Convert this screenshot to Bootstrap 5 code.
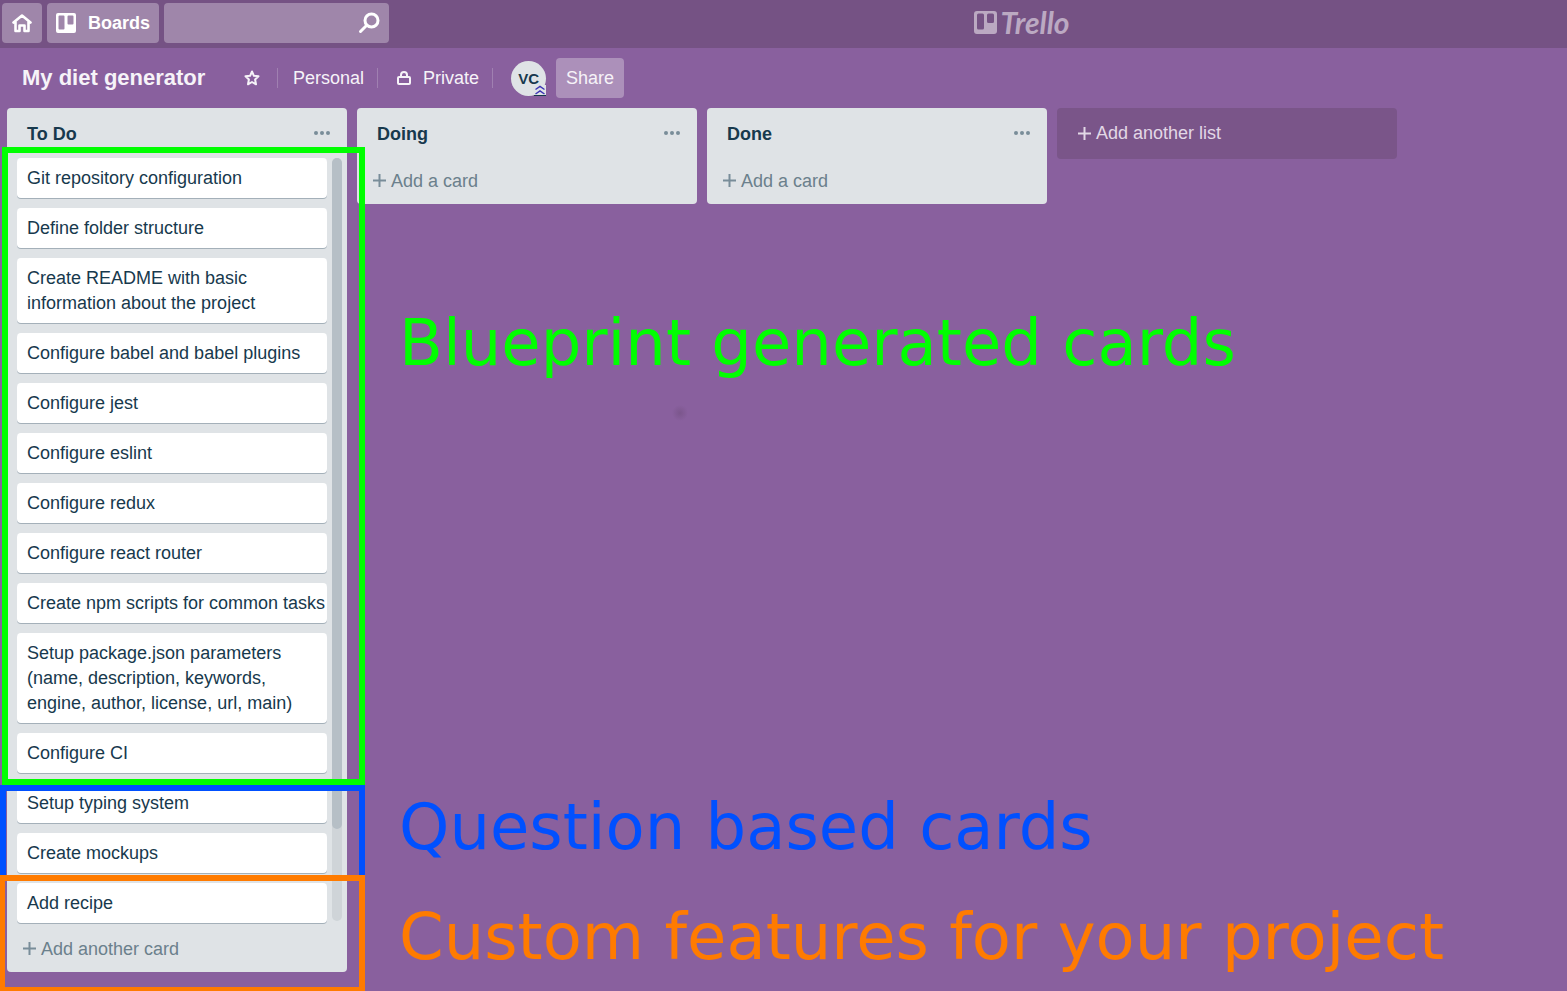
<!DOCTYPE html>
<html lang="en">
<head>
<meta charset="utf-8">
<meta name="viewport" content="width=device-width, initial-scale=1">
<title>My diet generator | Trello</title>
<link href="https://cdn.jsdelivr.net/npm/bootstrap@5.3.0/dist/css/bootstrap.min.css" rel="stylesheet">
<style>
  body { background: #89609e; color: #17394d; font: 18px/25px "Liberation Sans", Arial, sans-serif; min-height: 100vh; overflow: hidden; }
  button { line-height: 25px; }
  .topbar { background: #755284; height: 48px; padding: 3px 2px 5px; gap: 5px; }
  .top-btn { --bs-btn-padding-x: 10px; --bs-btn-padding-y: 0; --bs-btn-font-size: 18px; --bs-btn-font-weight: 700; --bs-btn-border-width: 0; --bs-btn-border-radius: 4px; --bs-btn-color: #fff; --bs-btn-bg: #9f86aa; --bs-btn-hover-bg: #ab94b5; --bs-btn-hover-color: #fff; height: 40px; }
  .boards-btn { --bs-btn-padding-x: 9px; gap: 12px; }
  .top-search { width: 225px; height: 40px; }
  .top-search .form-control { background: #9f86aa; border: 0; border-radius: 4px; color: #fff; height: 40px; padding: 0 40px 0 10px; }
  .search-icon { top: 9px; right: 9px; }
  .brand { left: 62%; top: 7px; height: 30px; gap: 4px; color: #bba9c2; font: italic 700 30px/30px Lato, sans-serif; text-decoration: none; margin-left: 2px; }
  .boardbar { height: 60px; padding-left: 22px; color: #f6f3f8; }
  .boardbar a { color: inherit; text-decoration: none; }
  .boardbar h1 { font-size: 22px; line-height: 30px; font-weight: 700; width: 187px; white-space: nowrap; }
  .rule { width: 1px; height: 20px; background: #a080b1; }
  .plain { background: none; border: 0; padding: 0; color: inherit; display: flex; align-items: center; }
  .star { margin: 0 17px 0 35px; }
  .team { padding: 0 13px 0 15px; }
  .privacy { margin: 0 13px 0 18px; gap: 12px; }
  .avatar { width: 35px; height: 35px; background: #dfe3e6; color: #17394d; font-size: 15px; font-weight: 700; margin-left: 18px; }
  .avatar svg { right: 0; bottom: 0; }
  .share { --bs-btn-bg: #ac90ba; --bs-btn-color: #f6f3f8; --bs-btn-font-weight: 400; margin-left: 10px; }
  .board { gap: 10px; padding: 0 7px; background: radial-gradient(circle at 680px 305px, #7b568c 0, #89609e 8px); min-height: 883px; }
  .lane { width: 340px; border-radius: 4px; background: #dfe3e6; }
  .lane-head { height: 50px; padding: 0 16px 0 20px; }
  .lane-head h2 { font-size: 18px; line-height: 25px; font-weight: 700; padding-top: 2px; }
  .lane-body { padding: 0 5px 3px 10px; gap: 5px; }
  .tasks { gap: 10px; }
  .task { background: #fff; border-radius: 4px; box-shadow: 0 1px 0 #a4b0b9; padding: 8px 0 7px 10px; }
  .track { width: 10px; border-radius: 5px; background: #cfd4d8; margin-bottom: 2px; }
  .thumb { border-radius: 5px; background: #b6bfc6; }
  .add-card { height: 46px; padding: 0 15px; gap: 4px; color: #6b808c; }
  .new-lane { width: 340px; height: 51px; border-radius: 4px; background: #7a5589; color: #e2d8e6; padding: 0 20px; gap: 4px; }
  .notes { top: 147px; pointer-events: none; font: 64px/76px "DejaVu Sans", sans-serif; }
  .note { white-space: nowrap; gap: 34px; }
  .frame { width: 365px; border: 6px solid; }
  .note-green { height: 638px; color: #0f0; }
  .note-green .frame { width: 363px; margin-left: 2px; }
  .note-green p { padding-top: 158px; }
  .note-blue { height: 90px; color: #0050ff; }
  .note-blue .frame { border-bottom: 0; }
  .note-blue p { padding-top: 4px; }
  .note-orange { height: 116px; color: #ff7b00; }
  .note-orange .frame { border-left-width: 5px; border-bottom-width: 4px; }
  .note-orange p { padding-top: 24px; }
</style>
</head>
<body class="position-relative">
<header class="topbar d-flex position-relative">
  <button class="btn top-btn d-flex align-items-center" type="button" aria-label="Home">
    <svg width="20" height="20" viewBox="0 0 20 20" fill="none" stroke="#fff" stroke-width="3" stroke-linejoin="round" stroke-linecap="round"><path d="M1.500 9.500 10 2.500l8.500 7M3.500 9v9h4v-5.500h5V18h4V9" stroke-width="2.600"/></svg>
  </button>
  <button class="btn top-btn boards-btn d-flex align-items-center" type="button">
    <svg width="20" height="20" viewBox="0 0 20 20"><path fill="#fff" fill-rule="evenodd" d="M2 0h16a2 2 0 0 1 2 2v16a2 2 0 0 1-2 2H2a2 2 0 0 1-2-2V2a2 2 0 0 1 2-2zm1.500 2.500a1 1 0 0 0-1 1v12a1 1 0 0 0 1 1h4a1 1 0 0 0 1-1v-12a1 1 0 0 0-1-1zm9 0a1 1 0 0 0-1 1v7a1 1 0 0 0 1 1h4a1 1 0 0 0 1-1v-7a1 1 0 0 0-1-1z"/></svg>
    <span>Boards</span>
  </button>
  <form class="top-search position-relative" role="search">
    <input class="form-control" type="text" aria-label="Search">
    <svg class="search-icon position-absolute" width="22" height="22" viewBox="0 0 22 22" fill="none" stroke="#fff" stroke-width="3" stroke-linecap="round"><circle cx="13.500" cy="8.500" r="6.500"/><path d="M8.500 13.500 2.500 19.500"/></svg>
  </form>
  <a class="brand position-absolute d-flex align-items-center" href="#">
    <svg width="23" height="23" viewBox="0 0 23 23"><path fill="#bba9c2" fill-rule="evenodd" d="M3 0h17a3 3 0 0 1 3 3v17a3 3 0 0 1-3 3H3a3 3 0 0 1-3-3V3a3 3 0 0 1 3-3zm1.500 2.500a1.500 1.500 0 0 0-1.500 1.500v13a1.500 1.500 0 0 0 1.500 1.500h4a1.500 1.500 0 0 0 1.500-1.500V4a1.500 1.500 0 0 0-1.500-1.500zm10 0A1.500 1.500 0 0 0 13 4v6.500a1.500 1.500 0 0 0 1.500 1.500h4a1.500 1.500 0 0 0 1.500-1.500V4a1.500 1.500 0 0 0-1.500-1.500z"/></svg>
    <span>Trello</span>
  </a>
</header>

<nav class="boardbar d-flex align-items-center" aria-label="Board">
  <h1 class="mb-0">My diet generator</h1>
  <button class="plain star" type="button" aria-label="Star board">
    <svg width="16" height="16" viewBox="0 0 16 16" fill="none" stroke="#f6f3f8" stroke-width="2" stroke-linejoin="round"><path d="m8 1.500 1.900 4.300 4.600.500-3.400 3.200.900 4.800L8 12l-4 2.300.900-4.800L1.500 6.300l4.600-.500z"/></svg>
  </button>
  <span class="rule"></span>
  <a class="team" href="#">Personal</a>
  <span class="rule"></span>
  <button class="plain privacy" type="button">
    <svg width="15" height="16" viewBox="0 0 15 16" fill="none" stroke="#f6f3f8" stroke-width="2"><rect x="2" y="7" width="12" height="7" rx="1"/><path d="M5 7V5a3 3 0 0 1 6 0v2"/></svg>
    <span>Private</span>
  </button>
  <span class="rule"></span>
  <span class="avatar rounded-circle position-relative d-flex align-items-center justify-content-center">VC
    <svg class="position-absolute" width="12" height="11" viewBox="0 0 12 11"><path fill="#dfe3e6" d="M0 0h12v10H0z"/><path d="M1.500 4.500 6 1.500l4.500 3M1.500 9 6 6l4.500 3" fill="none" stroke="#3d35b5" stroke-width="1.500"/><path fill="#17394d" d="M0 10h12v1H0z"/></svg>
  </span>
  <button class="btn top-btn share" type="button">Share</button>
</nav>

<main class="board d-flex align-items-start">
  <section class="lane flex-shrink-0">
    <div class="lane-head d-flex align-items-center justify-content-between">
      <h2 class="mb-0">To Do</h2>
      <button class="plain" type="button" aria-label="List actions"><svg width="18" height="6" viewBox="0 0 18 6" fill="#798d99"><circle cx="3" cy="3" r="2"/><circle cx="9" cy="3" r="2"/><circle cx="15" cy="3" r="2"/></svg></button>
    </div>
    <div class="lane-body d-flex">
      <div class="tasks d-flex flex-column flex-grow-1">
        <div class="task">Git repository configuration</div>
        <div class="task">Define folder structure</div>
        <div class="task">Create README with basic information about the project</div>
        <div class="task">Configure babel and babel plugins</div>
        <div class="task">Configure jest</div>
        <div class="task">Configure eslint</div>
        <div class="task">Configure redux</div>
        <div class="task">Configure react router</div>
        <div class="task">Create npm scripts for common tasks</div>
        <div class="task">Setup package.json parameters (name, description, keywords, engine, author, license, url, main)</div>
        <div class="task">Configure CI</div>
        <div class="task">Setup typing system</div>
        <div class="task">Create mockups</div>
        <div class="task">Add recipe</div>
      </div>
      <div class="track flex-shrink-0"><div class="thumb" style="height: 88%"></div></div>
    </div>
    <button class="plain add-card w-100" type="button"><svg width="15" height="14" viewBox="0 0 15 14" stroke="#798d99" stroke-width="2"><path d="M7.500 0v13M1 6.500h13"/></svg>Add another card</button>
  </section>

  <section class="lane flex-shrink-0">
    <div class="lane-head d-flex align-items-center justify-content-between">
      <h2 class="mb-0">Doing</h2>
      <button class="plain" type="button" aria-label="List actions"><svg width="18" height="6" viewBox="0 0 18 6" fill="#798d99"><circle cx="3" cy="3" r="2"/><circle cx="9" cy="3" r="2"/><circle cx="15" cy="3" r="2"/></svg></button>
    </div>
    <button class="plain add-card w-100" type="button"><svg width="15" height="14" viewBox="0 0 15 14" stroke="#798d99" stroke-width="2"><path d="M7.500 0v13M1 6.500h13"/></svg>Add a card</button>
  </section>

  <section class="lane flex-shrink-0">
    <div class="lane-head d-flex align-items-center justify-content-between">
      <h2 class="mb-0">Done</h2>
      <button class="plain" type="button" aria-label="List actions"><svg width="18" height="6" viewBox="0 0 18 6" fill="#798d99"><circle cx="3" cy="3" r="2"/><circle cx="9" cy="3" r="2"/><circle cx="15" cy="3" r="2"/></svg></button>
    </div>
    <button class="plain add-card w-100" type="button"><svg width="15" height="14" viewBox="0 0 15 14" stroke="#798d99" stroke-width="2"><path d="M7.500 0v13M1 6.500h13"/></svg>Add a card</button>
  </section>

  <button class="plain new-lane flex-shrink-0" type="button"><svg width="15" height="14" viewBox="0 0 15 14" stroke="#e2d8e6" stroke-width="2"><path d="M7.500 0v13M1 6.500h13"/></svg>Add another list</button>
</main>

<!-- Coloured frames over the first list, each with its caption beside it -->
<div class="notes position-absolute start-0 end-0">
  <div class="note note-green d-flex"><div class="frame flex-shrink-0"></div><p class="mb-0">Blueprint generated cards</p></div>
  <div class="note note-blue d-flex"><div class="frame flex-shrink-0"></div><p class="mb-0">Question based cards</p></div>
  <div class="note note-orange d-flex"><div class="frame flex-shrink-0"></div><p class="mb-0">Custom features for your project</p></div>
</div>
<script src="https://cdn.jsdelivr.net/npm/bootstrap@5.3.0/dist/js/bootstrap.bundle.min.js"></script>
</body>
</html>
